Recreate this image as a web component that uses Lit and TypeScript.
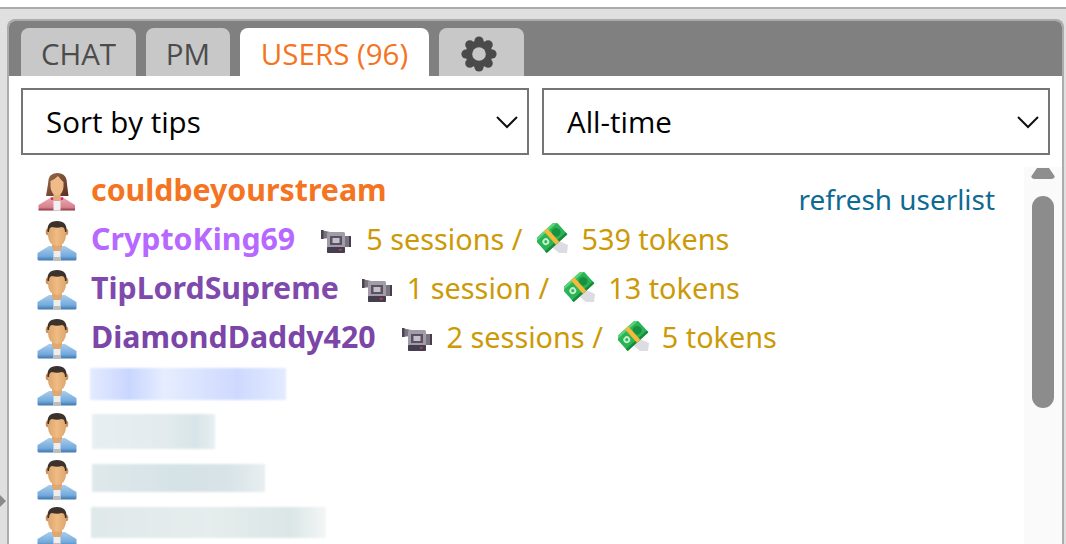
import { LitElement, html, css, svg } from "lit";
import { customElement } from "lit/decorators.js";

const male = html`<svg class="av" width="40" height="40" viewBox="0 0 40 40">
  <defs>
    <linearGradient id="shirtM" x1="0" y1="0" x2="0" y2="1"><stop offset="0" stop-color="#a9cdee"/><stop offset=".7" stop-color="#74aadc"/><stop offset="1" stop-color="#3f76ac"/></linearGradient>
    <linearGradient id="skinM" x1="0" y1="0" x2="1" y2="0"><stop offset="0" stop-color="#dca56d"/><stop offset=".5" stop-color="#f0bc83"/><stop offset="1" stop-color="#dca56d"/></linearGradient>
  </defs>
  <path d="M0.500 32 L12 25 L28 25 L39.500 32 L39.500 38 Q39.500 39.500 38 39.500 L2 39.500 Q0.500 39.500 0.500 38 Z" fill="url(#shirtM)"/>
  <path d="M15 20 H25 V27 L23 30 H17 L15 27 Z" fill="#dfa772"/>
  <rect x="16.500" y="30" width="7" height="10" fill="#eeeeee"/>
  <rect x="16.500" y="36" width="7" height="4" fill="#bdbdbd"/>
  <ellipse cx="10.500" cy="11" rx="1.800" ry="3.200" fill="#c99262"/>
  <ellipse cx="29.500" cy="11" rx="1.800" ry="3.200" fill="#c99262"/>
  <path d="M11 8 Q11 2 20 2 Q29 2 29 8 V14 Q29 24 20 25 Q11 24 11 14 Z" fill="url(#skinM)"/>
  <path d="M10.500 11 Q9.500 0 20 0 Q30.500 0 29.500 11 L28 11 Q28 6.500 25 6 Q20 7.500 15 6 Q12 6.500 12 11 Z" fill="#3d312c"/>
</svg>`;

const female = html`<svg class="av" width="40" height="40" viewBox="0 0 40 40">
  <defs>
    <linearGradient id="shirtF" x1="0" y1="0" x2="0" y2="1"><stop offset="0" stop-color="#e9a9b2"/><stop offset=".75" stop-color="#d9808e"/><stop offset="1" stop-color="#8c3040"/></linearGradient>
    <linearGradient id="hairF" x1="0" y1="0" x2="1" y2="1"><stop offset="0" stop-color="#9c6a4c"/><stop offset="1" stop-color="#5a2f22"/></linearGradient>
  </defs>
  <path d="M11 12 Q11 1 20 1 Q30 1 30 12 L31.500 24 L9 24 Z" fill="url(#hairF)"/>
  <path d="M1.500 33 L13 26 L27 26 L38 33 L38 38.500 L1.500 38.500 Z" fill="url(#shirtF)"/>
  <path d="M13.500 25.500 L16.500 25 L16.500 28 L14 28 Z M26.500 25.500 L23.500 25 L23.500 28 L26 28 Z" fill="#d8306a"/>
  <path d="M16.500 20 H23.500 V28 H16.500 Z" fill="#e3ab7a"/>
  <rect x="16.500" y="29" width="7" height="9.500" fill="#f1f1f1"/>
  <path d="M13.500 9 Q17 8 21 4 Q25 9 26.500 10 V15 Q26 22 20 24 Q14 22 13.500 15 Z" fill="#efbb88"/>
</svg>`;

const camera = html`<svg class="ic" width="32" height="26" viewBox="0 0 32 26">
  <path d="M1 2 L10 4 V10 L1 11 Z" fill="#7b7480"/>
  <rect x="1" y="2" width="2.500" height="9" fill="#4a4450"/>
  <rect x="7" y="4" width="18" height="21" rx="1.500" fill="#a29ba8"/>
  <rect x="7" y="19" width="18" height="6" rx="1" fill="#453e50"/>
  <rect x="10" y="8" width="12" height="9" fill="#5a5262"/>
  <rect x="12.500" y="10" width="7" height="5" fill="#c5bfca"/>
  <rect x="25" y="8" width="6" height="11" fill="#7b7480"/>
  <rect x="29" y="8" width="2" height="11" fill="#453e50"/>
  <rect x="19" y="21" width="2.500" height="1.500" fill="#d0404a"/>
</svg>`;

const money = html`<svg class="ic money" width="32" height="32" viewBox="0 0 32 32">
  <path d="M22 18 L31 22 L30 30 L22 30 L15 24 Z" fill="#dcdce2"/>
  <g transform="rotate(-42 14 14)">
    <rect x="0" y="5" width="28" height="18" rx="1" fill="#2bb455"/>
    <rect x="0" y="5" width="28" height="2.500" fill="#5ad67a"/>
    <rect x="0" y="20.500" width="28" height="2.500" fill="#178a3e"/>
    <circle cx="21" cy="14" r="4.400" fill="#17903f"/>
    <rect x="12.500" y="5" width="4.500" height="18" fill="#f6b93b"/>
    <circle cx="7" cy="14" r="3.400" fill="#c4f0cf"/>
    <circle cx="7" cy="14" r="1.500" fill="#2bb455"/>
  </g>
</svg>`;

const gearTeeth = [0, 45, 90, 135, 180, 225, 270, 315].map(
  (a) => svg`<circle cx="18" cy="5" r="4.600" transform="rotate(${a} 18 18)"/>`
);
const gear = html`<svg width="36" height="36" viewBox="0 0 36 36" fill="#4a4a4a">
  ${gearTeeth}
  <circle cx="18" cy="18" r="13.500"/>
  <circle cx="18" cy="18" r="6.800" fill="#c8c8c8"/>
</svg>`;

const chevron = html`<svg class="chev" width="24" height="14" viewBox="0 0 24 14" fill="none" stroke="#111" stroke-width="2"><path d="M2 2 L12 12 L22 2"/></svg>`;

interface User { name: string; color: string; gap: number; sessions: string; tokens: string; }
const users: User[] = [
  { name: "CryptoKing69", color: "#b768ff", gap: 25, sessions: "5 sessions", tokens: "539 tokens" },
  { name: "TipLordSupreme", color: "#804aad", gap: 22, sessions: "1 session", tokens: "13 tokens" },
  { name: "DiamondDaddy420", color: "#7c45a8", gap: 25, sessions: "2 sessions", tokens: "5 tokens" },
];

interface Blur { x: number; y: number; w: number; h: number; bg: string; }
const blurred: Blur[] = [
  { x: 0, y: 6, w: 196, h: 32, bg: "linear-gradient(90deg,#e4ebff,#c9d6ff 20%,#e6edff 38%,#cdd9ff 75%,#e4ebff)" },
  { x: 2, y: 5, w: 123, h: 35, bg: "linear-gradient(90deg,#e8eff2,#e3ebee 60%,#d8e5e8 85%,#e8eff2)" },
  { x: 2, y: 8, w: 173, h: 28, bg: "linear-gradient(90deg,#dfe9ec,#d5e2e6 50%,#d8e4e7 80%,#e8eff1)" },
  { x: 1, y: 4, w: 235, h: 31, bg: "linear-gradient(90deg,#e0e9ea,#e6eded 50%,#dbe6e6 85%,#f3f6f6)" },
];

@customElement("app-root")
export class AppRoot extends LitElement {
  static styles = css`
    :host { display: block; width: 1066px; height: 544px; overflow: hidden; position: relative; background: #e0e0e0; font-family: "Open Sans", "Noto Sans", sans-serif; }
    .topline { height: 7px; background: #fff; border-bottom: 2px solid #acacac; }
    .panel { margin: 10px 2px 0 7px; height: 600px; border: 2px solid #acacac; border-bottom: 0; border-radius: 8px 8px 0 0; background: #fff; overflow: hidden; }
    .tabs { display: flex; gap: 10px; background: #808080; height: 55px; padding: 7px 0 0 12px; box-sizing: border-box; align-items: stretch; }
    .tab { background: #c8c8c8; color: #4c4c4c; border-radius: 8px 8px 0 0; font-size: 29.500px; display: flex; align-items: center; justify-content: center; box-sizing: border-box; height: 48px; padding-top: 2px; }
    .tab.active { background: #fff; color: #f47421; }
    .t1 { width: 115px; } .t2 { width: 84px; } .t3 { width: 189px; } .t4 { width: 85px; padding: 4px 5px 0 0; }
    .filters { display: flex; gap: 13px; padding: 12px 12px 0 12px; }
    .select { flex: 1; height: 67px; box-sizing: border-box; border: 2px solid #757575; display: flex; align-items: center; justify-content: space-between; padding: 0 8px 0 23px; font-size: 29.500px; color: #000; }
    .body { display: flex; height: 460px; margin-top: 12px; }
    .list { flex: 1; padding: 0 0 0 28px; position: relative; }
    .row { display: flex; align-items: center; height: 49px; }
    .row.b { height: 47px; }
    .spacer { height: 0; margin-top: -1px; }
    .av { flex: none; margin-right: 14px; }
    .name { font-family: "Noto Sans", "Open Sans", sans-serif; font-size: 30.300px; font-weight: 700; white-space: nowrap; margin-bottom: 5px; }
    .name.me { color: #f47421; }
    .stats { display: flex; align-items: center; color: #cc9a06; font-size: 28.800px; font-family: "Noto Sans", sans-serif; white-space: nowrap; }
    .stats .ic { flex: none; }
    .stats .money { margin-bottom: 3px; }
    .stats .s { margin: 0 15px 5px 14px; }
    .stats .t { margin: 0 0 5px 12px; }
    .blur { filter: blur(1px); align-self: flex-start; }
    .refresh { position: absolute; top: 13px; right: 29px; font-size: 27.900px; color: #0d6a93; font-family: "Noto Sans", sans-serif; }
    .sb { width: 38px; background: #fafafa; flex: none; display: flex; flex-direction: column; align-items: center; }
    .up { width: 24px; height: 11px; background: #8e8e8e; clip-path: polygon(25% 0, 75% 0, 100% 80%, 100% 100%, 0 100%, 0 80%); border-radius: 0 0 4px 4px; margin-top: 1px; }
    .thumb { width: 22px; height: 212px; border-radius: 11px; background: #8c8c8c; margin-top: 17px; }
    .tri { position: absolute; left: 0; top: 495px; width: 0; height: 0; border-left: 6px solid #8a8a8a; border-top: 6px solid transparent; border-bottom: 6px solid transparent; }
  `;

  render() {
    return html`
      <div class="topline"></div>
      <div class="panel">
        <div class="tabs">
          <div class="tab t1">CHAT</div>
          <div class="tab t2">PM</div>
          <div class="tab t3 active">USERS (96)</div>
          <div class="tab t4">${gear}</div>
        </div>
        <div class="filters">
          <div class="select">Sort by tips ${chevron}</div>
          <div class="select">All-time ${chevron}</div>
        </div>
        <div class="body">
          <div class="list">
            <div class="refresh">refresh userlist</div>
            <div class="row">${female}<span class="name me">couldbeyourstream</span></div>
            ${users.map((u) => html`<div class="row">${male}<span class="name" style="color:${u.color}">${u.name}</span>
              <span class="stats" style="margin-left:${u.gap}px">${camera}<span class="s">${u.sessions} /</span>${money}<span class="t">${u.tokens}</span></span></div>`)}
            <div class="spacer"></div>
            ${blurred.map((b) => html`<div class="row b">${male}<div class="blur" style="margin:${b.y}px 0 0 ${b.x - 1}px;width:${b.w}px;height:${b.h}px;background:${b.bg}"></div></div>`)}
          </div>
          <div class="sb"><div class="up"></div><div class="thumb"></div></div>
        </div>
      </div>
      <div class="tri"></div>
    `;
  }
}
